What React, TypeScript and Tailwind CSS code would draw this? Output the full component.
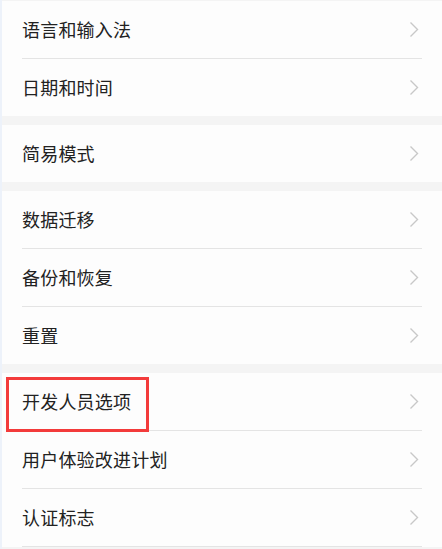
const groups: string[][] = [
  ["语言和输入法", "日期和时间"],
  ["简易模式"],
  ["数据迁移", "备份和恢复", "重置"],
  ["开发人员选项", "用户体验改进计划", "认证标志"],
];

function Chevron() {
  return (
    <svg width="10" height="17" viewBox="0 0 10 17" className="shrink-0">
      <path d="M1.5 1.5 L8.5 8.5 L1.5 15.5" fill="none" stroke="#c8c8c8" strokeWidth="1.4" />
    </svg>
  );
}

function Row({ label, divider, highlight }: { label: string; divider: boolean; highlight?: boolean }) {
  return (
    <div className="relative">
      <div className="h-[57px] flex items-center justify-between pl-[20px] pr-[23px]">
        <span className="text-[18px] text-[#222222] tracking-[0.2px]">{label}</span>
        <Chevron />
      </div>
      {divider && <div className="ml-[20px] mr-[20px] h-px bg-[#e4e4e4]" />}
      {highlight && (
        <div className="absolute left-[4px] top-[4px] w-[143px] h-[55px] border-[3px] border-[#f33b3b]" />
      )}
    </div>
  );
}

export default function App() {
  return (
    <div
      className="w-[442px] h-[549px] overflow-hidden bg-[#f4f4f4] border-l-2 border-[#edf2fa] pt-px flex flex-col gap-[9px]"
      style={{ fontFamily: '"Noto Sans CJK SC", "Noto Sans", sans-serif' }}
    >
      {groups.map((items, gi) => (
        <div key={gi} className="bg-[#fdfdfd]">
          {items.map((label, i) => (
            <Row
              key={label}
              label={label}
              divider={i < items.length - 1 || gi === groups.length - 1}
              highlight={label === "开发人员选项"}
            />
          ))}
        </div>
      ))}
    </div>
  );
}
